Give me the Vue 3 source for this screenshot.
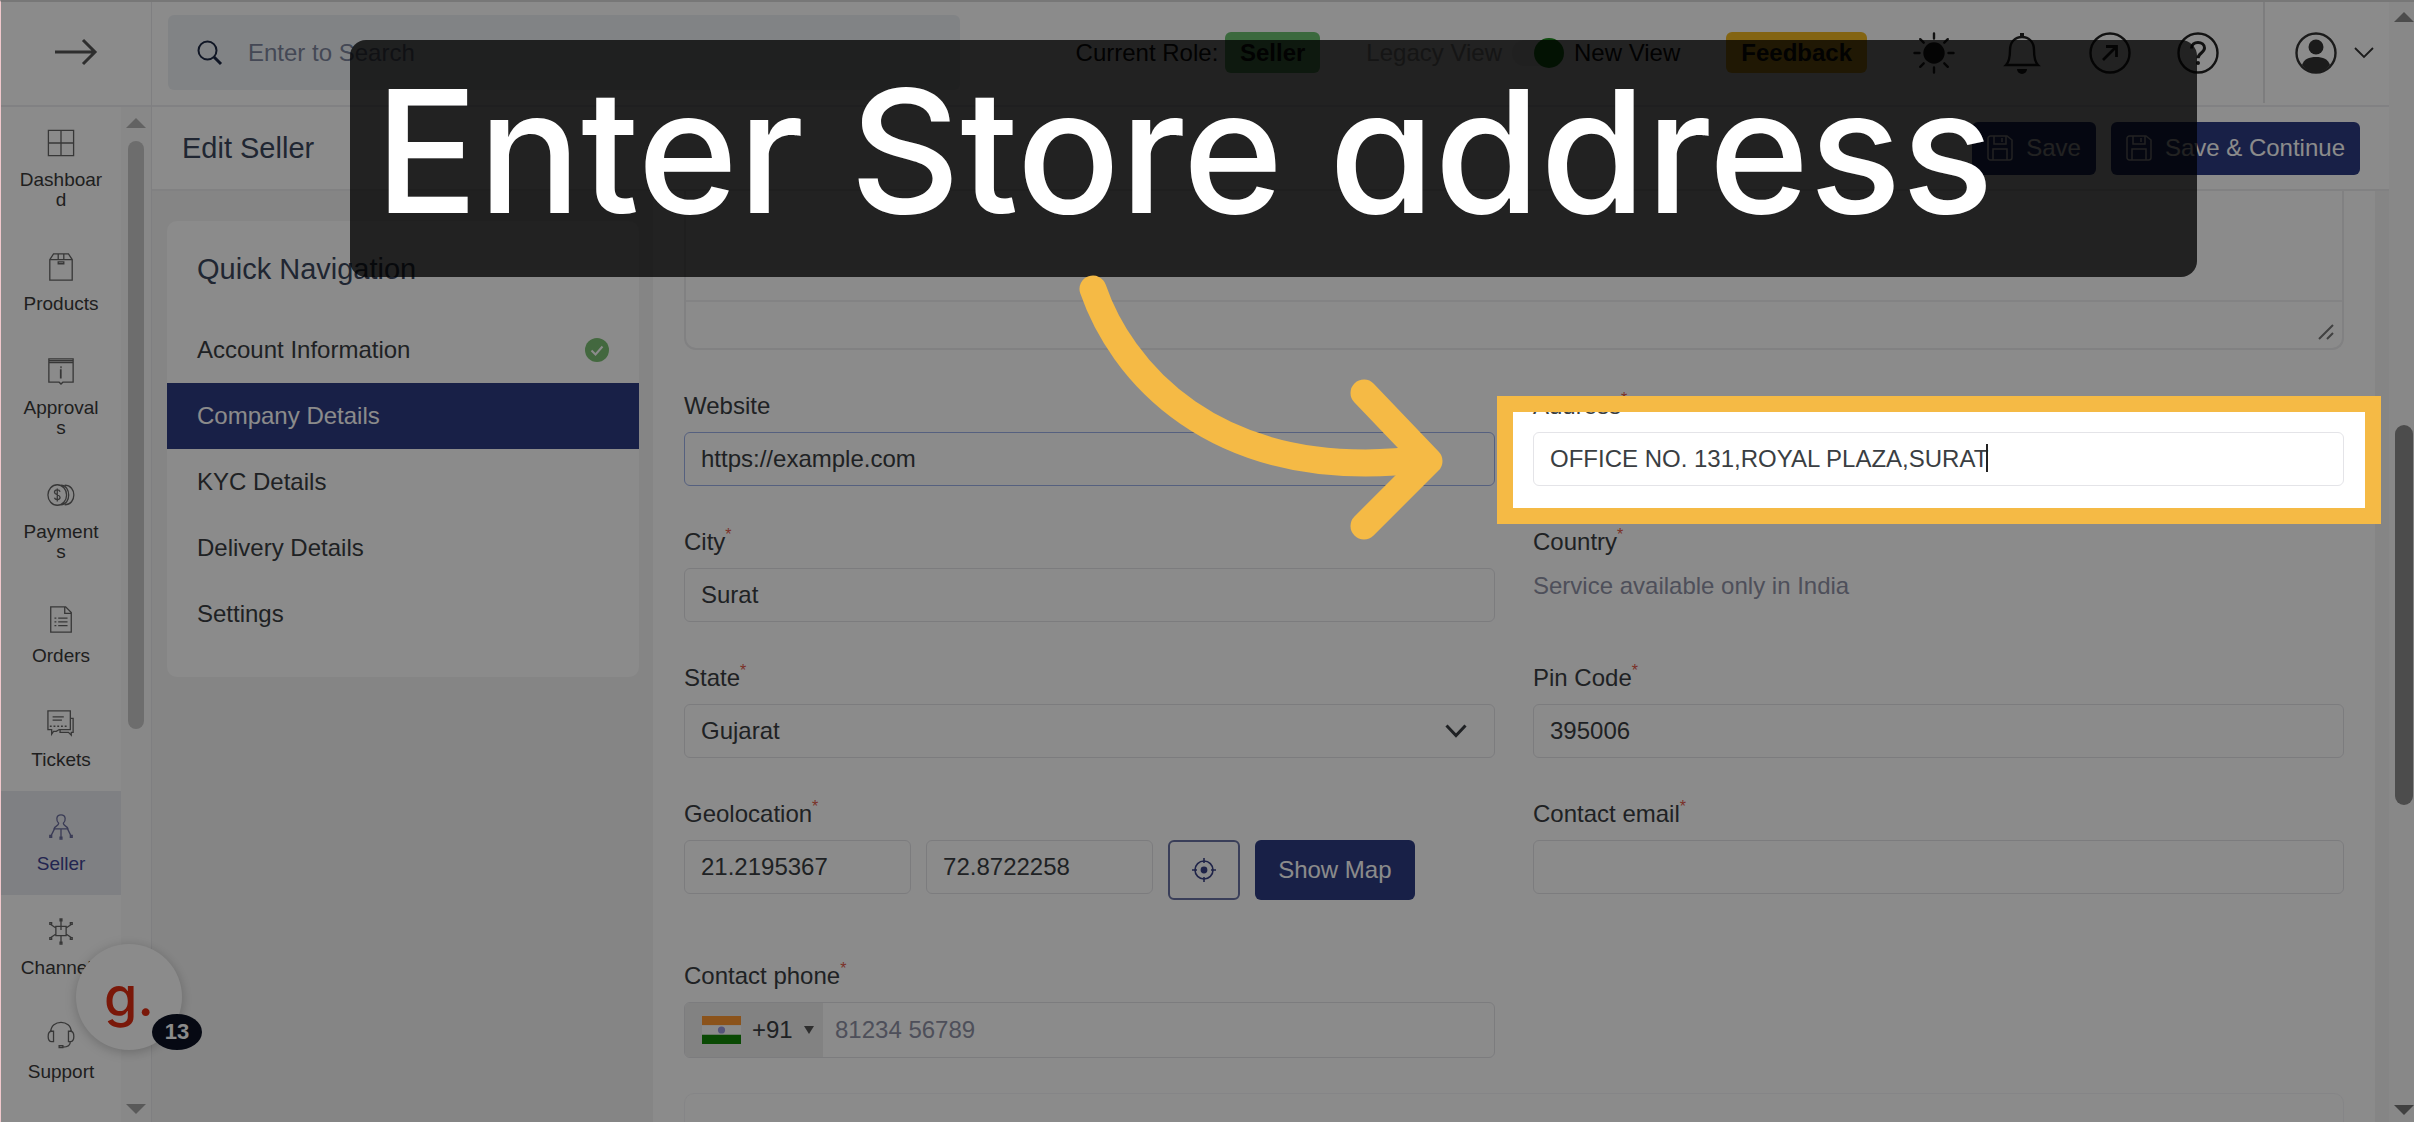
<template>
  <div class="app">
    <aside class="sidebar">
      <button class="expand" aria-label="Expand menu">
        <svg width="44" height="28" viewBox="0 0 44 28" fill="none" stroke="currentColor" stroke-width="3"><path d="M1 14h40M29 2l12 12-12 12" /></svg>
      </button>
      <div class="side-body">
        <nav class="side-nav">
          <a v-for="item in menu" :key="item.name" href="#" class="side-item" :class="{ active: item.name === 'Seller' }">
            <svg width="28" height="28" viewBox="0 0 30 30" fill="none" stroke="currentColor" stroke-width="1.4"><path :d="item.icon" /></svg>
            <span>{{ item.name }}</span>
          </a>
        </nav>
        <div class="rail">
          <i class="tri up"></i>
          <i class="thumb side-thumb"></i>
          <i class="tri down"></i>
        </div>
      </div>
    </aside>

    <div class="main">
      <header class="topbar">
        <label class="search">
          <svg width="26" height="26" viewBox="0 0 26 26" fill="none" stroke="currentColor"><circle cx="10.5" cy="10.5" r="9" stroke-width="2" /><path d="M17 17l7 7" stroke-width="3" /></svg>
          <input type="text" placeholder="Enter to Search" aria-label="Search">
        </label>
        <div class="tools">
          <span class="role">Current Role: <b class="badge green">Seller</b></span>
          <div class="view-switch">
            <span class="legacy">Legacy View</span>
            <button class="toggle" role="switch" aria-checked="true" aria-label="New View"><i></i></button>
            <span>New View</span>
          </div>
          <button class="badge yellow">Feedback</button>
          <button class="icon-btn" aria-label="Theme">
            <svg width="42" height="42" viewBox="0 0 42 42" stroke="currentColor" stroke-width="2.4" stroke-linecap="round"><circle cx="21" cy="21" r="9.5" fill="currentColor" /><path d="M21 1.5v5M21 35.5v5M1.5 21h5M35.5 21h5M7.2 7.2l3.5 3.5M31.3 31.3l3.5 3.5M7.2 34.8l3.5-3.5M31.3 10.7l3.5-3.5" /></svg>
          </button>
          <button class="icon-btn" aria-label="Notifications">
            <svg width="42" height="42" viewBox="0 0 42 42" fill="none" stroke="currentColor" stroke-width="2.4"><path d="M5 33h32c-3-3-4-8-4-15 0-8-5-13-12-13S9 10 9 18c0 7-1 12-4 15z" /><path d="M21 5V1" stroke-width="4" /><path d="M16 37h10a5 5 0 0 1-10 0z" fill="currentColor" stroke="none" /></svg>
          </button>
          <button class="icon-btn" aria-label="Open">
            <svg width="42" height="42" viewBox="0 0 42 42" fill="none" stroke="currentColor" stroke-width="2.4"><circle cx="21" cy="21" r="19.5" /><path d="M14 28l13-13M17 14.5h10.5V25" stroke-width="2.8" /></svg>
          </button>
          <button class="icon-btn" aria-label="Help">
            <svg width="42" height="42" viewBox="0 0 42 42" fill="none" stroke="currentColor" stroke-width="2.4"><circle cx="21" cy="21" r="19.5" /><path d="M14.5 16.5c0-4 3-6 6.5-6s6.5 2.2 6.5 5.6c0 4.9-6.5 4.9-6.5 10.2" stroke-width="3" /><circle cx="21" cy="31" r="2" fill="currentColor" stroke="none" /></svg>
          </button>
        </div>
        <button class="profile" aria-label="Account">
          <svg width="42" height="42" viewBox="0 0 42 42"><circle cx="21" cy="21" r="19.5" fill="none" stroke="currentColor" stroke-width="2.4" /><circle cx="21" cy="15" r="7.5" fill="currentColor" /><path d="M7 33c2-6 7-8 14-8s12 2 14 8c-4 5-9 7-14 7s-10-2-14-7z" fill="currentColor" /></svg>
          <svg width="20" height="14" viewBox="0 0 20 14" fill="none" stroke="currentColor" stroke-width="1.8"><path d="M1 2l9 9 9-9" /></svg>
        </button>
      </header>

      <div class="titlebar">
        <h1>Edit Seller</h1>
        <button v-for="t in ['Save', 'Save & Continue']" :key="t" class="btn save">
          <svg width="26" height="26" viewBox="0 0 26 26" fill="none" stroke="currentColor" stroke-width="1.5"><path d="M1 3.5A2.5 2.5 0 0 1 3.5 1H20l5 4v17.5a2.5 2.5 0 0 1-2.5 2.5h-19A2.5 2.5 0 0 1 1 22.5zM7 1v8h12V1M15 3v4M6 25V14h14v11" /></svg>
          {{ t }}
        </button>
      </div>

      <div class="body">
        <nav class="quick">
          <h2>Quick Navigation</h2>
          <a v-for="s in sections" :key="s" href="#" :class="{ current: s === 'Company Details' }">
            {{ s }}
            <svg v-if="s === 'Account Information'" width="24" height="24" viewBox="0 0 24 24"><circle cx="12" cy="12" r="12" fill="#7cbf74" /><path d="M6.5 12.5l4 4 7-8" fill="none" stroke="#fff" stroke-width="2" /></svg>
          </a>
        </nav>

        <form class="panel" @submit.prevent>
          <div class="editor">
            <textarea v-model="form.about" aria-label="About"></textarea>
            <div class="editor-foot">
              <svg width="16" height="16" viewBox="0 0 16 16" stroke="currentColor" stroke-width="2"><path d="M1 15L15 1M9 15l6-6" /></svg>
            </div>
          </div>

          <div class="grid">
            <div class="field">
              <label for="website">Website</label>
              <input id="website" v-model="form.website" class="control linked" type="text">
            </div>
            <div class="field">
              <label for="address">Address<sup>*</sup></label>
              <input id="address" v-model="form.address" class="control" type="text">
              <i class="caret"></i>
            </div>
            <div class="field">
              <label for="city">City<sup>*</sup></label>
              <input id="city" v-model="form.city" class="control" type="text">
            </div>
            <div class="field">
              <span class="label">Country<sup>*</sup></span>
              <p class="hint">Service available only in India</p>
            </div>
            <div class="field">
              <label for="state">State<sup>*</sup></label>
              <div class="select-wrap">
                <select id="state" v-model="form.state" class="control">
                  <option>Gujarat</option>
                  <option>Maharashtra</option>
                </select>
                <svg width="22" height="14" viewBox="0 0 22 14" fill="none" stroke="currentColor" stroke-width="3"><path d="M1.5 1.5L11 11.5l9.5-10" /></svg>
              </div>
            </div>
            <div class="field">
              <label for="pin">Pin Code<sup>*</sup></label>
              <input id="pin" v-model="form.pin" class="control" type="text">
            </div>
            <div class="field">
              <label for="lat">Geolocation<sup>*</sup></label>
              <div class="geo">
                <input id="lat" v-model="form.lat" class="control" type="text">
                <input v-model="form.lng" class="control" type="text" aria-label="Longitude">
                <button type="button" class="btn locate" aria-label="Use my location">
                  <svg width="24" height="24" viewBox="0 0 24 24" fill="none" stroke="currentColor" stroke-width="1.6"><circle cx="12" cy="12" r="9" /><circle cx="12" cy="12" r="2.6" fill="currentColor" /><path d="M12 0v5M12 19v5M0 12h5M19 12h5" /></svg>
                </button>
                <button type="button" class="btn map">Show Map</button>
              </div>
            </div>
            <div class="field">
              <label for="email">Contact email<sup>*</sup></label>
              <input id="email" v-model="form.email" class="control" type="email">
            </div>
            <div class="field">
              <label for="phone">Contact phone<sup>*</sup></label>
              <div class="phone">
                <button type="button" class="dial">
                  <svg width="39" height="28" viewBox="0 0 39 28"><path fill="#ff9933" d="M0 0h39v9.3H0z" /><path fill="#fff" d="M0 9.3h39v9.4H0z" /><path fill="#138808" d="M0 18.7h39V28H0z" /><circle cx="19.5" cy="14" r="3.6" fill="#9c9ce0" /></svg>
                  +91
                  <i class="dial-caret"></i>
                </button>
                <input id="phone" v-model="form.phone" type="tel" placeholder="81234 56789">
              </div>
            </div>
          </div>
          <div class="next-card"></div>
        </form>
      </div>
    </div>

    <div class="rail page-rail">
      <i class="tri up"></i>
      <i class="thumb page-thumb"></i>
      <i class="tri down"></i>
    </div>

    <button class="widget" aria-label="Open guides">g.<span class="count">13</span></button>

    <!-- guide layer -->
    <div class="guide">
      <div class="spot"></div>
      <div class="caption">Enter Store address</div>
      <svg class="arrow" width="380" height="280" viewBox="0 0 380 280" fill="none" stroke="#f5ba45" stroke-width="27" stroke-linecap="round" stroke-linejoin="round">
        <path d="M19 19C45 95 135 216 352 189" />
        <path d="M290 123l65 68-65 65" />
      </svg>
    </div>
  </div>
</template>

<script setup>
import { reactive } from 'vue'

const form = reactive({
  about: '',
  website: 'https://example.com',
  address: 'OFFICE NO. 131,ROYAL PLAZA,SURAT',
  city: 'Surat',
  state: 'Gujarat',
  pin: '395006',
  lat: '21.2195367',
  lng: '72.8722258',
  email: '',
  phone: ''
})

const sections = ['Account Information', 'Company Details', 'KYC Details', 'Delivery Details', 'Settings']

const menu = [
  { name: 'Dashboard', icon: 'M1.5 1.5h27v27h-27zM15 1.5v27M1.5 15h27' },
  { name: 'Products', icon: 'M3 7l4-6h16l4 6v22H3zM3 7h24M12 1v6M18 1v6M12 9.5h6v2h-6z' },
  { name: 'Approvals', icon: 'M2 2h26v25H17l-2 2-2-2H2zM2 4h26M2 6h26M15 10v2M15 13v10M14.5 13v10' },
  { name: 'Payments', icon: 'M21 15A10 11 0 1 1 1 15A10 11 0 1 1 21 15M15 4.5c11 0 11 21 0 21M19 4.5c13 0 13 21 0 21M14 11.5c-1-3-6-2.5-6 .5s6 2.5 6 5.5-5 3.5-6 .5M11 8v14' },
  { name: 'Orders', icon: 'M4 2h16l6 6v21H4zM19 2v7h7M8 14h2M12 14h10M8 18h2M12 18h10M8 22h2M12 22h10' },
  { name: 'Tickets', icon: 'M1 2h24v20H13l-3 2H7l-2 3v-5H1zM6 8.5h12M6 12h10M3 18.5h2M7 18.5h2M11 18.5h2M15 18.5h2M19 18.5h2M25 10h3v15h-2v3l-3-3h-9v-3' },
  { name: 'Seller', icon: 'M15 2c-6 0-5 7-2.5 9 0 3-4.5 3-5 6h15c-.5-3-5-3-5-6 2.5-2 3.5-9-2.5-9M15 17v10M8 17L4 25M22 17l4 8M14 26h2v2h-2zM3 24h2v2H3zM25 24h2v2h-2z' },
  { name: 'Channels', icon: 'M9.5 10h11v10h-11zM15 10v4M15 10V2M15 20v8M10 12L4 8M20 12l6-4M10 18l-6 4M20 18l6 4M14 2h2v2h-2zM14 27h2v2h-2zM3 6h2v2H3zM25 6h2v2h-2zM3 22h2v2H3zM25 22h2v2h-2z' },
  { name: 'Support', icon: 'M4 12C4-2 26-2 26 12M5 11c-5 0-5 11 0 11h2V11zM25 11c5 0 5 11 0 11h-2V11zM25 22c0 4-3 6-8 6M13 26.5h4v2h-4z' }
]
</script>

<style>
body { margin: 0; background: #f5f5f5; overflow: hidden; }
</style>

<style scoped>
.app { position: relative; display: flex; height: 100vh; box-sizing: border-box; overflow: hidden; border-top: 2px solid #777; border-left: 1px solid #f0c8cc; background: #f5f5f5; color: #3a3e42; font: 24px/36px "Liberation Sans", Arial, sans-serif; }
button, input, select, textarea { font: inherit; color: inherit; border: 0; padding: 0; background: none; margin: 0; box-sizing: border-box; }
a { color: inherit; text-decoration: none; }
i { font-style: normal; }

/* sidebar */
.sidebar { flex: 0 0 150px; display: flex; flex-direction: column; background: #fff; border-right: 1px solid #e9e9ec; }
.expand { height: 105px; flex: none; padding-bottom: 4px; border-bottom: 2px solid #ededf0; display: flex; align-items: center; justify-content: center; color: #555; }
.side-body { flex: 1; display: flex; min-height: 0; }
.side-nav { flex: 1; min-width: 0; }
.side-item { display: flex; flex-direction: column; align-items: center; gap: 13px; padding: 22px 18px 21px; font-size: 19px; line-height: 20px; color: #3a3a3a; }
.side-item svg { flex: none; color: #666; }
.side-item span { max-width: 100%; text-align: center; overflow-wrap: anywhere; }
.side-item.active { background: #e9ebf0; color: #3f4494; }
.side-item.active svg { color: #6a6c9c; }
.rail { flex: 0 0 30px; display: flex; flex-direction: column; align-items: center; background: #fafafa; padding: 11px 0 8px; box-sizing: border-box; }
.tri { border: 10px solid transparent; border-top-width: 0; border-bottom: 10px solid #b4b4b4; }
.tri.down { border-width: 10px 10px 0; border-top-color: #a4a4a4; margin-top: auto; }
.thumb { width: 16px; border-radius: 8px; background: #c8c8c8; margin-top: 13px; }
.side-thumb { height: 59%; }

/* top bar */
.main { flex: 1; min-width: 0; display: flex; flex-direction: column; }
.topbar { height: 105px; flex: none; display: flex; align-items: center; background: #fff; border-bottom: 2px solid #ededf0; box-sizing: border-box; padding: 0 0 2px 16px; }
.search { flex: 0 1 792px; height: 75px; display: flex; align-items: center; gap: 25px; padding-left: 29px; box-sizing: border-box; border-radius: 6px; background: #edf1f5; color: #1f2a44; }
.search input { flex: 1; outline: none; }
.search input::placeholder { color: #7d859c; opacity: 1; }
.tools { flex: 1; display: flex; align-items: center; justify-content: flex-end; gap: 46px; padding-right: 44px; color: #222; white-space: nowrap; }
.role { color: #111; }
.badge { display: inline-block; height: 41px; line-height: 41px; padding: 0 15px; border-radius: 6px; font-weight: bold; color: #111; }
.badge.green { background: #6cc070; }
.badge.yellow { background: #f0b822; }
.view-switch { display: flex; align-items: center; color: #111; }
.legacy { color: #a0a0a0; }
.toggle { width: 52px; height: 26px; margin: 0 10px; border-radius: 13px; background: #f2f2f2; display: flex; align-items: center; justify-content: flex-end; }
.toggle i { width: 30px; height: 30px; border-radius: 50%; background: #1f8a1f; }
.icon-btn { width: 42px; height: 42px; }
.icon-btn svg { display: block; }
.profile { align-self: stretch; display: flex; align-items: center; gap: 17px; padding: 0 15px 0 30px; border-left: 2px solid #e6e6e8; color: #333; }

.titlebar { height: 84px; flex: none; box-sizing: border-box; display: flex; align-items: center; gap: 15px; padding: 0 29px 0 30px; background: #fff; border-bottom: 2px solid #ececee; }
h1, h2 { margin: 0; font-size: 29px; font-weight: normal; color: #3b475c; }
h1 { flex: 1; }
.btn { border-radius: 6px; background: #2c3b82; color: #fff; cursor: pointer; }
.save { height: 53px; display: flex; align-items: center; gap: 13px; padding: 0 15px; }

/* page body */
.body { flex: 1; min-height: 0; display: flex; gap: 14px; align-items: flex-start; padding: 0 14px 0 15px; }
.quick { flex: 0 0 472px; margin-top: 30px; padding-bottom: 30px; border-radius: 10px; background: #fff; overflow: hidden; }
.quick h2 { padding: 30px; }
.quick a { display: flex; align-items: center; justify-content: space-between; height: 66px; padding: 0 30px; color: #3a3e42; }
.quick a.current { background: #2c3b82; color: #fff; }
.panel { flex: 1; min-width: 0; padding: 0 31px; background: #fff; }
.editor { height: 159px; box-sizing: border-box; display: flex; flex-direction: column; border: 2px solid #ececee; border-top: 0; border-radius: 0 0 12px 12px; }
.editor textarea { flex: 1; resize: none; outline: none; }
.editor-foot { height: 48px; box-sizing: border-box; border-top: 2px solid #f0f0f2; display: flex; align-items: center; justify-content: flex-end; padding: 14px 8px 0 0; color: #777; }
.grid { display: grid; grid-template-columns: 1fr 1fr; gap: 38px; padding-top: 38px; }
.field { position: relative; display: flex; flex-direction: column; gap: 8px; }
.field label, .label { height: 36px; }
sup { font-size: 16px; line-height: 0; vertical-align: 10px; color: #e25a4a; }
.control { width: 100%; height: 54px; padding: 0 16px; border: 1px solid #e4e4e8; border-radius: 6px; background: #fff; }
.linked { border-color: #9db1ea; }
.caret { position: absolute; left: 453px; top: 56px; width: 2px; height: 28px; background: #222; }
.hint { margin: 0; color: #8f92a6; }
.select-wrap { position: relative; }
.select-wrap select { appearance: none; display: block; }
.select-wrap svg { position: absolute; right: 28px; top: 20px; pointer-events: none; }
.geo { display: flex; gap: 15px; margin-bottom: 20px; }
.geo .control { width: 28%; }
.btn.locate { width: 72px; height: 60px; border: 2px solid #6a72a4; background: #fff; color: #3a4286; display: flex; align-items: center; justify-content: center; }
.btn.map { height: 60px; padding: 0 23px; }
.phone { display: flex; height: 56px; box-sizing: border-box; border: 1px solid #e4e4e8; border-radius: 6px; overflow: hidden; }
.phone input { flex: 1; padding-left: 12px; outline: none; }
.phone input::placeholder { color: #8f92a6; opacity: 1; }
.dial { display: flex; align-items: center; gap: 11px; width: 138px; padding-left: 17px; background: #eeeeee; }
.dial-caret { border: 5px solid transparent; border-top: 8px solid #555; border-bottom: 0; }
.next-card { height: 80px; margin-top: 35px; border: 1px solid #f5f5f7; border-radius: 10px; }

.page-rail { flex: 0 0 23px; padding: 10px 0 7px 5px; }
.page-rail .tri { border-bottom-color: #8b8b8b; }
.page-rail .tri.down { border-top-color: #777; }
.page-thumb { width: 18px; height: 380px; margin-top: 403px; background: #8b8b8b; border-radius: 9px; }

.widget { position: absolute; left: 75px; bottom: 72px; width: 106px; height: 106px; border-radius: 50%; background: #fff; box-shadow: 0 2px 12px rgba(0, 0, 0, .22); color: #e02d12; font: 500 54px/86px Inter, sans-serif; }
.count { position: absolute; right: -20px; bottom: 0; width: 50px; height: 36px; border-radius: 50%; background: #0b1224; color: #fff; font: bold 22px/36px "Liberation Sans", Arial, sans-serif; }

/* guide: everything outside the spot is dimmed by its shadow */
.guide { position: absolute; inset: -2px 0 0 -1px; pointer-events: none; }
.spot { position: absolute; left: 62%; right: 33px; top: 396px; height: 128px; box-sizing: border-box; border: 16px solid #f5ba45; box-shadow: 0 0 0 9999px rgba(0, 0, 0, .455); }
.caption { position: absolute; left: 14.5%; right: 9%; top: 40px; height: 237px; box-sizing: border-box; padding-left: 25px; border-radius: 16px; background: rgba(0, 0, 0, .755); color: #fff; font: 500 171px/222px Inter, sans-serif; font-feature-settings: "cv11"; white-space: nowrap; }
.arrow { position: absolute; left: 44.5%; top: 270px; }
</style>
